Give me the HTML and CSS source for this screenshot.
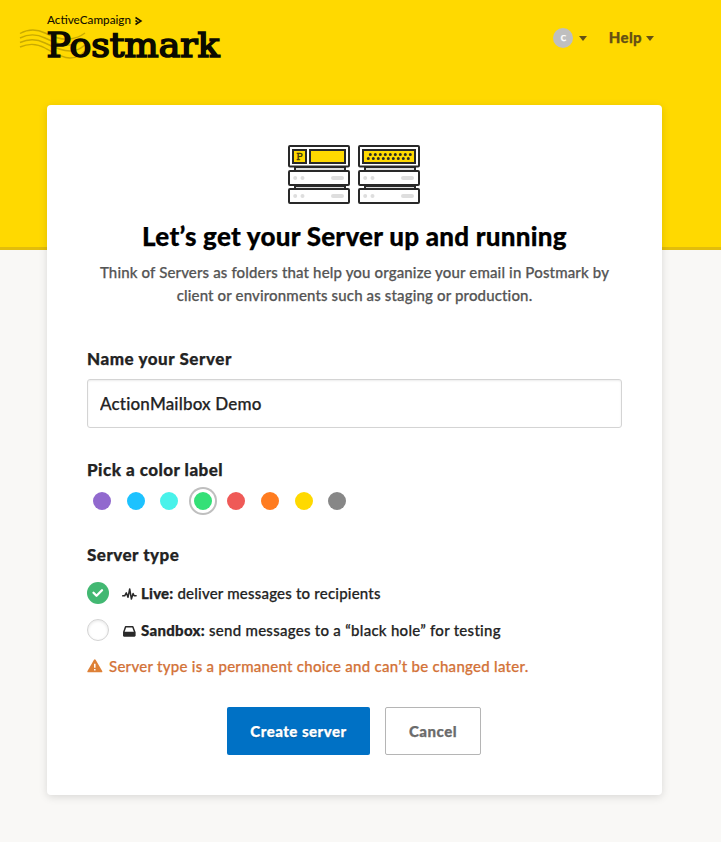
FILE: index.html
```html
<!DOCTYPE html>
<html lang="en">
<head>
<meta charset="utf-8">
<title>Create a server</title>
<link rel="stylesheet" href="styles.css">
</head>
<body>
<header class="header">
  <svg class="logo" width="204" height="50" viewBox="0 0 204 50" role="img" aria-label="ActiveCampaign Postmark">
    <g class="waves">
      <path d="M0 18.500C8 14 17 14 25 18S42 25 50 24 61 21 65 18M0 23C8 19 17 19 25 23S42 31 50 30 61 27 65 24M0 27.500C8 24 17 24 25 28S42 36 50 36 61 33 65 30M0 32C8 28.500 17 28.500 25 33S42 43 50 43 61 40 65 36"/>
    </g>
    <text class="logo-top" x="27" y="9" textLength="84" lengthAdjust="spacingAndGlyphs">ActiveCampaign</text>
    <path class="logo-arrow" d="M115.500 2.500l5.500 3.500-5.500 3.500M115.500 5.500l2 1.300"/>
    <text class="logo-name" x="26.500" y="41.500" textLength="173" lengthAdjust="spacingAndGlyphs">Postmark</text>
  </svg>
  <nav class="nav">
    <span class="avatar">C</span><i class="caret"></i>
    <span class="help">Help</span><i class="caret"></i>
  </nav>
</header>
<main class="card">
  <svg class="servers" width="132" height="60" viewBox="0 0 132 60" aria-hidden="true">
    <defs>
      <g id="rack">
        <path class="joint" d="M7 22h50v4H7zM7 41h50v3H7z"/>
        <rect class="unit" x="1" y="1" width="60" height="20.500" rx="1"/>
        <rect class="unit" x="1" y="26" width="60" height="14" rx="1"/>
        <rect class="unit" x="1" y="44" width="60" height="14" rx="1"/>
        <g class="lamp">
          <circle cx="7.200" cy="33" r="2"/><circle cx="14.500" cy="33" r="2"/><rect x="43" y="31" width="13" height="4" rx="2"/>
          <circle cx="7.200" cy="51" r="2"/><circle cx="14.500" cy="51" r="2"/><rect x="43" y="49" width="13" height="4" rx="2"/>
        </g>
      </g>
    </defs>
    <use href="#rack"/>
    <use href="#rack" x="70"/>
    <rect class="panel" x="5" y="5" width="13" height="13"/>
    <rect class="panel" x="22" y="5" width="35" height="13"/>
    <rect class="panel" x="75" y="5" width="52" height="13"/>
    <text class="panel-p" x="11.500" y="14.800">P</text>
    <path class="vents" d="M82.300 9.500h41M80.300 13.500h41"/>
  </svg>
  <h1 class="title">Let’s get your Server up and running</h1>
  <p class="intro">Think of Servers as folders that help you organize your email in Postmark by<br>client or environments such as staging or production.</p>

  <label class="label label-name" for="name">Name your Server</label>
  <input class="field" id="name" type="text" value="ActionMailbox Demo">

  <h2 class="label label-color">Pick a color label</h2>
  <div class="swatches">
    <i class="swatch purple"></i><i class="swatch blue"></i><i class="swatch cyan"></i><i class="swatch green selected"></i><i class="swatch red"></i><i class="swatch orange"></i><i class="swatch yellow"></i><i class="swatch gray"></i>
  </div>

  <h2 class="label label-type">Server type</h2>
  <div class="option option-live">
    <span class="radio checked"><svg width="22" height="22" viewBox="0 0 22 22"><path d="M6.500 10.800l3 3 5.500-5.500"/></svg></span>
    <svg class="icon" width="15" height="14" viewBox="0 0 15 14"><path class="pulse" d="M.7 8.800h2l1.600-3 1.700 4.500L7.700 2l1.700 10 1.700-5.500 1 2.300h2"/></svg>
    <span><b>Live:</b> deliver messages to recipients</span>
  </div>
  <div class="option option-sandbox">
    <span class="radio"></span>
    <svg class="icon" width="15" height="14" viewBox="0 0 15 14"><path class="tray" d="M3.600 2.800h7.200l1.800 5v4H1.900v-4z"/><path class="tray-fill" d="M1.200 7.800h12.200v3.500q0 1.300-1.200 1.300H2.400q-1.200 0-1.200-1.300z"/></svg>
    <span><b>Sandbox:</b> send messages to a “black hole” for testing</span>
  </div>
  <p class="warning">
    <svg width="16" height="14" viewBox="0 0 16 14"><path class="tri" d="M7 .8q.800-1.200 1.600 0l6.600 11.300q.500 1.200-.8 1.200H1.200Q0 13.300.5 12.100z"/><path class="bang" d="M7.800 4.800v4M7.800 10v1.400"/></svg>
    <span>Server type is a permanent choice and can’t be changed later.</span>
  </p>
  <div class="actions">
    <button class="button primary">Create server</button>
    <button class="button secondary">Cancel</button>
  </div>
</main>
</body>
</html>
```
FILE: styles.css
```css
* { box-sizing: border-box; }
body { margin: 0; min-height: 842px; background: #f9f8f6; color: #232323; font: 500 15px/23px Lato, "Liberation Sans", sans-serif; font-variant-ligatures: none; -webkit-text-stroke: .25px currentColor; }
.header { height: 250px; padding: 15px 67px 0 20px; display: flex; justify-content: space-between; align-items: flex-start; background: #ffd900; border-bottom: 3px solid #e2bd0c; }
.logo { display: block; overflow: visible; -webkit-text-stroke: 0; }
.waves { fill: none; stroke: #c9aa00; stroke-width: 1.4; }
.logo-top { font: 500 11px Lato, sans-serif; fill: #151100; }
.logo-arrow { fill: none; stroke: #151100; stroke-width: 1.5; }
.logo-name { font: 400 33px "DejaVu Serif", serif; fill: #0b0a00; stroke: #0b0a00; stroke-width: 1.7; }
.nav { display: flex; align-items: center; height: 22px; margin-top: 12px; color: #655114; }
.avatar { width: 20px; height: 20px; border-radius: 50%; background: #bfbfbf; color: #fff; font: 700 8px/20px Lato, sans-serif; text-align: center; }
.caret { border: 4px solid transparent; border-top: 5px solid #655114; border-bottom: 0; margin-left: 6px; }
.help { margin: -1px 0 0 21.500px; font-weight: 900; font-size: 15px; letter-spacing: .35px; }
.help + .caret { margin-left: 4px; }
.card { width: 615px; height: 690px; margin: -145px 0 0 47px; padding: 40px; background: #fff; border-radius: 4px; box-shadow: 0 2px 8px rgba(0,0,0,.13); }
.servers { display: block; margin: 0 0 0 201px; -webkit-text-stroke: 0; }
.unit { fill: #fff; stroke: #292929; stroke-width: 2; }
.joint { fill: #dedede; stroke: #292929; stroke-width: 2; }
.lamp { fill: #dedede; }
.panel { fill: #ffd900; stroke: #292929; stroke-width: 2; }
.panel-p { font: 400 9.5px "DejaVu Serif", serif; fill: #42390b; stroke: #42390b; stroke-width: .4; text-anchor: middle; }
.vents { stroke: #292929; stroke-width: 3; stroke-linecap: round; stroke-dasharray: 0 5; }
.title { margin: 15px 0 0; text-align: center; color: #000; font-size: 26px; font-weight: 900; line-height: 32px; letter-spacing: .25px; white-space: nowrap; }
.intro { margin: 9px -10px 0; text-align: center; color: #555; letter-spacing: .15px; white-space: nowrap; }
.label { display: block; margin: 0; color: #232323; font-size: 17px; line-height: 24px; font-weight: 900; letter-spacing: .47px; }
.label-name { margin-top: 40px; letter-spacing: .54px; }
.field { display: block; width: 535px; height: 49px; margin-top: 8px; padding: 0 12px 1px; border: 1px solid #d4d4d4; border-radius: 3px; box-shadow: inset 0 1px 2px rgba(0,0,0,.08); color: #232323; font: 500 17px Lato, sans-serif; letter-spacing: .18px; font-variant-ligatures: none; }
.label-color { margin-top: 30px; }
.swatches { display: flex; gap: 15.600px; margin: 10px 0 0 6px; }
.swatch { width: 18px; height: 18px; border-radius: 50%; }
.selected { box-shadow: 0 0 0 3px #fff, 0 0 0 5px #bfbfbf; }
.purple { background: #9169ce; } .blue { background: #1dc2ff; } .cyan { background: #49f2ea; } .green { background: #34e077; } .red { background: #ef5a57; } .orange { background: #ff7c20; } .yellow { background: #ffd900; } .gray { background: #878787; }
.label-type { margin-top: 33px; }
.option { display: flex; align-items: center; height: 24px; margin-top: 14px; white-space: nowrap; }
.option-live { letter-spacing: .21px; }
.option-sandbox { margin-top: 13px; letter-spacing: .28px; }
.option b { font-weight: 900; }
.radio { width: 22px; height: 22px; border-radius: 50%; border: 1px solid #d3d3d3; box-shadow: inset 0 1px 3px rgba(0,0,0,.1); }
.checked { border: 0; background: #42b872; box-shadow: none; }
.checked svg { display: block; fill: none; stroke: #fff; stroke-width: 2.300; stroke-linecap: round; stroke-linejoin: round; }
.icon { margin: 2px 4px 0 13px; }
.pulse { fill: none; stroke: #292929; stroke-width: 1.500; stroke-linejoin: round; stroke-linecap: round; }
.tray { fill: #fff; stroke: #292929; stroke-width: 1.500; stroke-linejoin: round; }
.tray-fill { fill: #292929; }
.warning { display: flex; align-items: center; gap: 6px; margin: 13px 0 0; height: 23px; color: #d37339; letter-spacing: .28px; white-space: nowrap; }
.warning svg { margin-top: -2px; }
.tri { fill: #de8137; }
.bang { stroke: #fff; stroke-width: 1.500; }
.actions { display: flex; gap: 15px; margin: 29px 0 0 140px; }
.button { height: 48px; padding: 0; border-radius: 2px; font: 900 15px Lato, sans-serif; letter-spacing: .5px; }
.primary { width: 143px; border: 0; background: #0071c5; color: #fff; text-shadow: 0 1px 1px rgba(0,0,0,.25); }
.secondary { width: 96px; border: 1px solid #b5b5b5; background: #fff; color: #6b6b6b; }
```
